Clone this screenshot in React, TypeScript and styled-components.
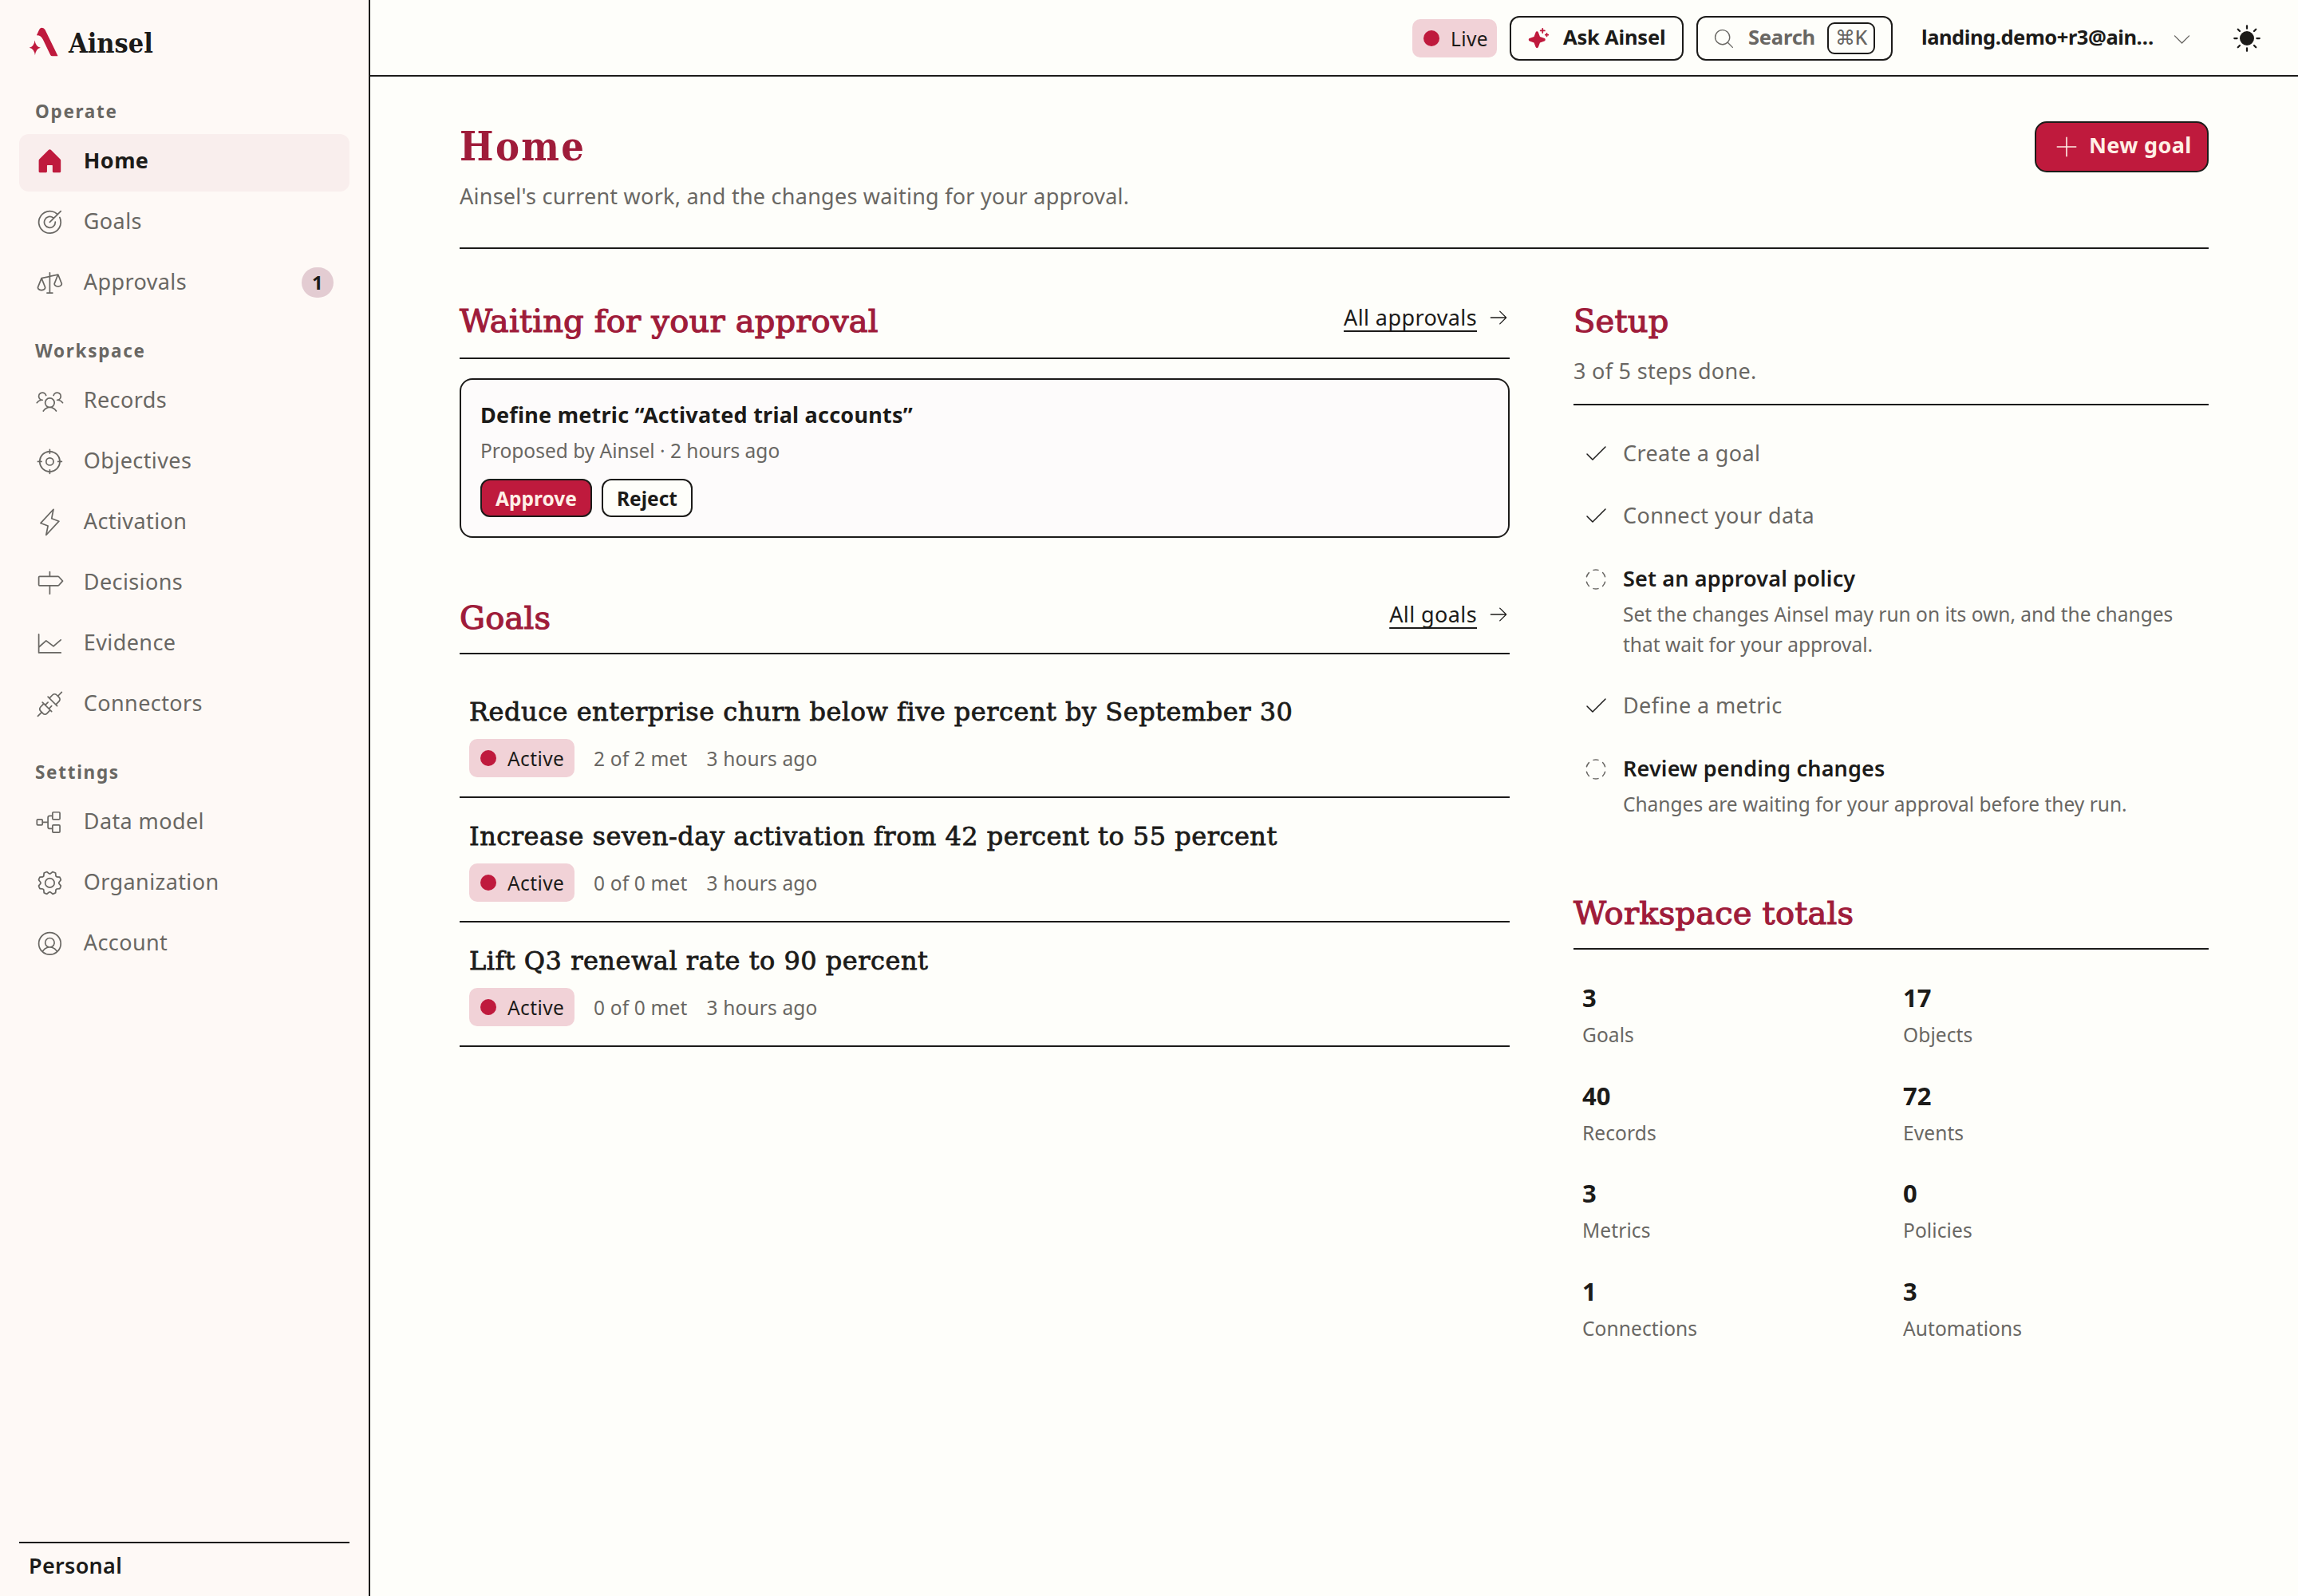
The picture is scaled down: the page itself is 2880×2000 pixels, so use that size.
import React from 'react';
import styled, { createGlobalStyle, css } from 'styled-components';
import type { IconType } from 'react-icons';
import {
  PiArrowRightLight,
  PiCaretDownLight,
  PiChartLineLight,
  PiCheckLight,
  PiCircleDashedLight,
  PiCrosshairLight,
  PiGearLight,
  PiHouseFill,
  PiLightningLight,
  PiMagnifyingGlassLight,
  PiPlugsLight,
  PiPlusLight,
  PiScalesLight,
  PiSignpostLight,
  PiSparkleFill,
  PiSunFill,
  PiTargetLight,
  PiTreeStructureLight,
  PiUserCircleLight,
  PiUsersThreeLight,
} from 'react-icons/pi';

const palette = {
  page: '#fefefa',
  sidebar: '#fef9f6',
  active: '#f9eeed',
  card: '#fdfbfb',
  ink: '#1c1b19',
  muted: '#696763',
  heading: '#9f1c3a',
  primary: '#bf1a3d',
  onPrimary: '#ffefe6',
  pill: '#f1d2d7',
  badge: '#e3ccd2',
};

const sans = `'Noto Sans', 'Open Sans', sans-serif`;
const serif = `'DejaVu Serif', serif`;
const serifCondensed = `'DejaVu Serif Condensed', 'DejaVu Serif', serif`;

type NavItem = {
  label: string;
  icon: IconType;
  active?: boolean;
  count?: number;
};

const navGroups: { title: string; items: NavItem[] }[] = [
  {
    title: 'Operate',
    items: [
      { label: 'Home', icon: PiHouseFill, active: true },
      { label: 'Goals', icon: PiTargetLight },
      { label: 'Approvals', icon: PiScalesLight, count: 1 },
    ],
  },
  {
    title: 'Workspace',
    items: [
      { label: 'Records', icon: PiUsersThreeLight },
      { label: 'Objectives', icon: PiCrosshairLight },
      { label: 'Activation', icon: PiLightningLight },
      { label: 'Decisions', icon: PiSignpostLight },
      { label: 'Evidence', icon: PiChartLineLight },
      { label: 'Connectors', icon: PiPlugsLight },
    ],
  },
  {
    title: 'Settings',
    items: [
      { label: 'Data model', icon: PiTreeStructureLight },
      { label: 'Organization', icon: PiGearLight },
      { label: 'Account', icon: PiUserCircleLight },
    ],
  },
];

const goals = [
  {
    title: 'Reduce enterprise churn below five percent by September 30',
    met: '2 of 2 met',
    time: '3 hours ago',
  },
  {
    title: 'Increase seven-day activation from 42 percent to 55 percent',
    met: '0 of 0 met',
    time: '3 hours ago',
  },
  {
    title: 'Lift Q3 renewal rate to 90 percent',
    met: '0 of 0 met',
    time: '3 hours ago',
  },
];

const steps: { title: string; description?: string }[] = [
  { title: 'Create a goal' },
  { title: 'Connect your data' },
  {
    title: 'Set an approval policy',
    description:
      'Set the changes Ainsel may run on its own, and the changes that wait for your approval.',
  },
  { title: 'Define a metric' },
  {
    title: 'Review pending changes',
    description: 'Changes are waiting for your approval before they run.',
  },
];

const totals: [string, string][] = [
  ['3', 'Goals'],
  ['17', 'Objects'],
  ['40', 'Records'],
  ['72', 'Events'],
  ['3', 'Metrics'],
  ['0', 'Policies'],
  ['1', 'Connections'],
  ['3', 'Automations'],
];

function Logo() {
  return (
    <LogoSvg viewBox="109 100 112 112">
      <path d="M139 131 L149 109 Q153 102 159 102 Q167 102 171 110 L219 208 Q220 210 217 210 H199 Q193 210 191 205 L163 147 Q155 130 139 131Z" />
      <path d="M132 150 Q135 174 154 178 Q136 182 133 207 Q130 182 111 178 Q129 174 132 150Z" />
    </LogoSvg>
  );
}

function Sidebar() {
  return (
    <SidebarBlock>
      <Brand>
        <Logo />
        <BrandName>Ainsel</BrandName>
      </Brand>
      {navGroups.map((group) => (
        <NavGroup key={group.title}>
          <NavTitle>{group.title}</NavTitle>
          {group.items.map(({ label, icon: Icon, active, count }) => (
            <NavLink key={label} $active={active}>
              <Icon />
              <span>{label}</span>
              {count && <Count>{count}</Count>}
            </NavLink>
          ))}
        </NavGroup>
      ))}
      <SidebarFooter>Personal</SidebarFooter>
    </SidebarBlock>
  );
}

function Topbar() {
  return (
    <TopbarBlock>
      <Pill $width={106}>Live</Pill>
      <AskButton>
        <PiSparkleFill />
        <span>Ask Ainsel</span>
      </AskButton>
      <SearchButton>
        <PiMagnifyingGlassLight />
        <span>Search</span>
        <Kbd>⌘K</Kbd>
      </SearchButton>
      <UserMenu>
        <span>landing.demo+r3@ain…</span>
        <PiCaretDownLight />
      </UserMenu>
      <PiSunFill size={36} />
    </TopbarBlock>
  );
}

function App() {
  return (
    <>
      <GlobalStyle />
      <Layout>
        <Sidebar />
        <Content>
          <Topbar />
          <Main>
            <PageHeader>
              <div>
                <h1>Home</h1>
                <p>
                  Ainsel's current work, and the changes waiting for your
                  approval.
                </p>
              </div>
              <NewGoalButton>
                <PiPlusLight />
                <span>New goal</span>
              </NewGoalButton>
            </PageHeader>
            <Columns>
              <div>
                <Section>
                  <SectionHeader $bottom={20}>
                    <h2>Waiting for your approval</h2>
                    <MoreLink>
                      <a>All approvals</a>
                      <PiArrowRightLight />
                    </MoreLink>
                  </SectionHeader>
                  <ApprovalCard>
                    <h3>Define metric “Activated trial accounts”</h3>
                    <p>Proposed by Ainsel · 2 hours ago</p>
                    <Actions>
                      <SmallButton $primary $width={140}>
                        Approve
                      </SmallButton>
                      <SmallButton $width={114}>Reject</SmallButton>
                    </Actions>
                  </ApprovalCard>
                </Section>
                <Section>
                  <SectionHeader $bottom={18}>
                    <h2>Goals</h2>
                    <MoreLink>
                      <a>All goals</a>
                      <PiArrowRightLight />
                    </MoreLink>
                  </SectionHeader>
                  <GoalList>
                    {goals.map((goal) => (
                      <GoalRow key={goal.title}>
                        <h3>{goal.title}</h3>
                        <GoalMeta>
                          <Pill $width={132}>Active</Pill>
                          <span>{goal.met}</span>
                          <span>{goal.time}</span>
                        </GoalMeta>
                      </GoalRow>
                    ))}
                  </GoalList>
                </Section>
              </div>
              <div>
                <Section>
                  <SetupHeader>
                    <h2>Setup</h2>
                    <p>3 of 5 steps done.</p>
                  </SetupHeader>
                  <StepList>
                    {steps.map(({ title, description }) =>
                      description ? (
                        <PendingStep key={title}>
                          <PiCircleDashedLight />
                          <div>
                            <h4>{title}</h4>
                            <p>{description}</p>
                          </div>
                        </PendingStep>
                      ) : (
                        <DoneStep key={title}>
                          <PiCheckLight />
                          <span>{title}</span>
                        </DoneStep>
                      ),
                    )}
                  </StepList>
                </Section>
                <Section>
                  <SectionHeader $bottom={18}>
                    <h2>Workspace totals</h2>
                  </SectionHeader>
                  <Totals>
                    {totals.map(([value, label]) => (
                      <div key={label}>
                        <dd>{value}</dd>
                        <dt>{label}</dt>
                      </div>
                    ))}
                  </Totals>
                </Section>
              </div>
            </Columns>
          </Main>
        </Content>
      </Layout>
    </>
  );
}

const GlobalStyle = createGlobalStyle`
  * {
    box-sizing: border-box;
  }
  body {
    margin: 0;
    background: ${palette.page};
    color: ${palette.ink};
    font-family: ${sans};
    font-size: 27px;
  }
  h1, h2, h3, h4, p, dl, dd, ul {
    margin: 0;
    padding: 0;
  }
  svg {
    flex-shrink: 0;
  }
`;

const Layout = styled.div`
  display: flex;
  width: 2880px;
  height: 2000px;
  overflow: hidden;
`;

const SidebarBlock = styled.aside`
  width: 464px;
  padding: 0 24px;
  display: flex;
  flex-direction: column;
  background: ${palette.sidebar};
  border-right: 2px solid ${palette.ink};
`;

const Brand = styled.div`
  height: 104px;
  padding-left: 12px;
  display: flex;
  align-items: center;
  gap: 13px;
`;

const LogoSvg = styled.svg`
  width: 37px;
  height: 37px;
  fill: ${palette.primary};
`;

const BrandName = styled.span`
  padding-top: 4px;
  font-family: ${serifCondensed};
  font-size: 34px;
  font-weight: bold;
`;

const NavGroup = styled.nav`
  display: flex;
  flex-direction: column;
  gap: 4px;
  margin-bottom: 12px;
`;

const NavTitle = styled.div`
  height: 60px;
  padding: 0 20px 2px;
  line-height: 72px;
  color: ${palette.muted};
  font-size: 22.5px;
  font-weight: bold;
  letter-spacing: 1.7px;
`;

const NavLink = styled.a<{ $active?: boolean }>`
  height: 72px;
  padding: 0 20px 4px;
  border-radius: 12px;
  display: flex;
  align-items: center;
  gap: 24px;
  color: ${palette.muted};
  letter-spacing: 0.4px;

  svg {
    width: 36.8px;
    height: 36.8px;
  }
  span {
    padding-bottom: 3px;
  }

  ${(props) =>
    props.$active &&
    css`
      background: ${palette.active};
      color: ${palette.ink};
      font-weight: bold;
      svg {
        color: ${palette.primary};
      }
    `}
`;

const Count = styled.b`
  width: 40px;
  height: 38px;
  margin-left: auto;
  border-radius: 20px;
  background: ${palette.badge};
  color: ${palette.ink};
  font-size: 24px;
  line-height: 37px;
  text-align: center;
`;

const SidebarFooter = styled.div`
  height: 68px;
  margin-top: auto;
  padding: 0 12px;
  border-top: 2px solid ${palette.ink};
  font-weight: 600;
  letter-spacing: 0.3px;
  line-height: 56px;
`;

const Content = styled.div`
  flex: 1;
  min-width: 0;
`;

const TopbarBlock = styled.header`
  height: 96px;
  padding: 2px 46px 0 0;
  display: flex;
  align-items: center;
  justify-content: flex-end;
  border-bottom: 2px solid ${palette.ink};
`;

const Pill = styled.span<{ $width: number }>`
  width: ${(props) => props.$width}px;
  height: 48px;
  padding-left: 14px;
  border-radius: 10px;
  display: inline-flex;
  align-items: center;
  gap: 14px;
  background: ${palette.pill};
  color: ${palette.ink};
  font-size: 24.5px;
  letter-spacing: 0.4px;

  &::before {
    content: '';
    width: 20px;
    height: 20px;
    border-radius: 50%;
    background: ${palette.primary};
  }
`;

const Button = styled.button`
  display: flex;
  align-items: center;
  border: 2px solid ${palette.ink};
  background: ${palette.page};
  color: ${palette.ink};
  font-family: inherit;
  font-weight: bold;
  white-space: nowrap;
`;

const AskButton = styled(Button)`
  width: 218px;
  height: 56px;
  margin-left: 16px;
  padding: 0 0 0 20px;
  border-radius: 12px;
  gap: 17px;
  font-size: 25.5px;
  letter-spacing: -0.2px;

  span {
    padding-bottom: 4px;
  }
  svg {
    width: 28px;
    height: 28px;
    color: ${palette.primary};
  }
`;

const SearchButton = styled(Button)`
  width: 246px;
  height: 56px;
  margin-left: 16px;
  padding: 0 20px 0 18px;
  border-radius: 12px;
  color: ${palette.muted};
  font-size: 25.5px;
  letter-spacing: -0.2px;

  span {
    padding-bottom: 4px;
  }
  svg {
    width: 29px;
    height: 29px;
    margin-right: 16px;
  }
`;

const Kbd = styled.kbd`
  width: 60px;
  height: 40px;
  margin-left: auto;
  border: 2px solid ${palette.ink};
  border-radius: 9px;
  font-family: ${sans};
  font-size: 25px;
  font-weight: 500;
  line-height: 32px;
  text-align: center;
`;

const UserMenu = styled.div`
  width: 341px;
  margin: 0 49px 0 36px;
  display: flex;
  align-items: center;
  justify-content: space-between;
  font-size: 25.5px;
  font-weight: bold;
  letter-spacing: -0.45px;

  span {
    padding-bottom: 5px;
  }
  svg {
    width: 29px;
    height: 29px;
    color: ${palette.muted};
  }
`;

const Main = styled.main`
  padding: 56px 112px 0;
`;

const PageHeader = styled.div`
  height: 160px;
  display: flex;
  justify-content: space-between;
  align-items: flex-start;
  border-bottom: 2px solid ${palette.ink};

  h1 {
    color: ${palette.heading};
    font-family: ${serifCondensed};
    font-size: 50px;
    letter-spacing: 2.4px;
    line-height: 64px;
  }
  p {
    margin-top: 10px;
    color: ${palette.muted};
    letter-spacing: 0.25px;
    line-height: 40px;
  }
`;

const NewGoalButton = styled(Button)`
  width: 218px;
  height: 64px;
  padding: 0 0 0 21px;
  border-radius: 15px;
  gap: 11px;
  background: ${palette.primary};
  color: ${palette.onPrimary};
  font-size: 27px;
  letter-spacing: 0.35px;

  span {
    padding-bottom: 5px;
  }
  svg {
    width: 34px;
    height: 34px;
  }
`;

const Columns = styled.div`
  margin-top: 64px;
  display: grid;
  grid-template-columns: 1316px 796px;
  column-gap: 80px;
`;

const Section = styled.section`
  margin-bottom: 74px;
`;

const SectionHeader = styled.div<{ $bottom: number }>`
  display: flex;
  justify-content: space-between;
  padding-bottom: ${(props) => props.$bottom}px;
  border-bottom: 2px solid ${palette.ink};

  h2 {
    color: ${palette.heading};
    font-family: ${serif};
    font-size: 40px;
    font-weight: normal;
    letter-spacing: 0.2px;
    line-height: 52px;
    -webkit-text-stroke: 1.2px;
  }
`;

const SetupHeader = styled(SectionHeader).attrs({ $bottom: 21 })`
  flex-direction: column;

  p {
    margin-top: 17px;
    color: ${palette.muted};
    letter-spacing: 0.3px;
    line-height: 40px;
  }
`;

const MoreLink = styled.div`
  height: 44px;
  display: flex;
  align-items: center;
  gap: 13px;

  a {
    letter-spacing: 0.4px;
    line-height: 44px;
    text-decoration: underline 2px;
    text-decoration-skip-ink: none;
    text-underline-offset: 6px;
  }
  svg {
    width: 28px;
    height: 28px;
  }
`;

const ApprovalCard = styled.article`
  height: 200px;
  margin-top: 24px;
  padding: 24px;
  border: 2px solid ${palette.ink};
  border-radius: 16px;
  background: ${palette.card};

  h3 {
    font-size: 27px;
    letter-spacing: 0.23px;
    line-height: 40px;
  }
  p {
    margin-top: 7px;
    color: ${palette.muted};
    font-size: 24.5px;
    line-height: 36px;
  }
`;

const Actions = styled.div`
  margin-top: 17px;
  display: flex;
  gap: 12px;
`;

const SmallButton = styled(Button)<{ $primary?: boolean; $width: number }>`
  width: ${(props) => props.$width}px;
  height: 48px;
  padding: 0;
  justify-content: center;
  border-radius: 12px;
  font-size: 24.5px;

  ${(props) =>
    props.$primary &&
    css`
      background: ${palette.primary};
      color: ${palette.onPrimary};
    `}
`;

const GoalList = styled.div`
  margin-top: 24px;
`;

const GoalRow = styled.div`
  height: 156px;
  padding: 24px 12px;
  border-bottom: 2px solid ${palette.ink};

  h3 {
    font-family: ${serif};
    font-size: 32px;
    font-weight: normal;
    letter-spacing: 0.5px;
    line-height: 48px;
    -webkit-text-stroke: 0.8px;
  }
`;

const GoalMeta = styled.div`
  margin-top: 10px;
  display: flex;
  align-items: center;
  gap: 24px;
  color: ${palette.muted};
  font-size: 24.5px;
  letter-spacing: 0.15px;
`;

const StepList = styled.div`
  margin-top: 20px;
`;

const DoneStep = styled.div`
  height: 78px;
  padding-left: 12px;
  display: flex;
  align-items: center;
  gap: 18px;
  color: ${palette.muted};
  letter-spacing: 0.4px;

  svg {
    width: 32px;
    height: 32px;
    color: ${palette.ink};
  }
`;

const PendingStep = styled.div`
  padding: 22px 12px 17px;
  display: flex;
  gap: 18px;
  color: ${palette.muted};

  svg {
    width: 32px;
    height: 32px;
    margin-top: 4px;
  }
  h4 {
    color: ${palette.ink};
    font-size: 27px;
    font-weight: 600;
    letter-spacing: 0.15px;
    line-height: 38px;
  }
  p {
    margin-top: 7px;
    font-size: 24.5px;
    line-height: 38px;
  }
`;

const Totals = styled.dl`
  margin-top: 38px;
  padding-left: 11px;
  display: grid;
  grid-template-columns: 402px 1fr;
  row-gap: 35.7px;

  dd {
    font-size: 31px;
    font-weight: bold;
    line-height: 44px;
  }
  dt {
    margin-top: 7px;
    color: ${palette.muted};
    font-size: 24.5px;
    letter-spacing: 0.1px;
    line-height: 36px;
  }
`;

export default App;
